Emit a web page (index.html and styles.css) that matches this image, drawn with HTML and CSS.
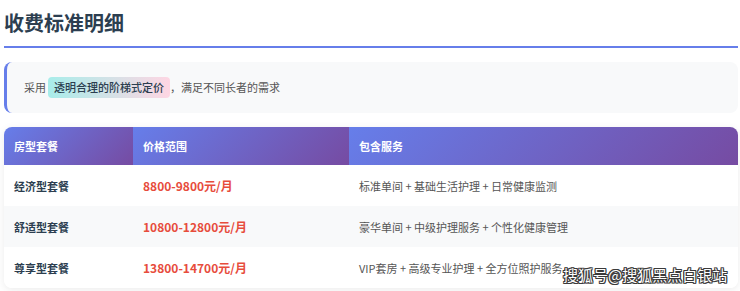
FILE: index.html
```html
<!DOCTYPE html>
<html lang="zh">
<head>
<meta charset="utf-8">
<title>收费标准明细</title>
<link rel="stylesheet" href="styles.css">
</head>
<body>
<div class="page">
  <h2 class="title">收费标准明细</h2>
  <div class="note">
    <span class="lead">采用</span><span class="hl">透明合理的阶梯式定价</span><span>，满足不同长者的需求</span>
  </div>
  <table class="fees">
    <thead>
      <tr>
        <th class="c1">房型套餐</th>
        <th class="c2">价格范围</th>
        <th class="c3">包含服务</th>
      </tr>
    </thead>
    <tbody>
      <tr>
        <td class="name">经济型套餐</td>
        <td class="price">8800-9800元/月</td>
        <td class="svc">标准单间 + 基础生活护理 + 日常健康监测</td>
      </tr>
      <tr class="alt">
        <td class="name">舒适型套餐</td>
        <td class="price">10800-12800元/月</td>
        <td class="svc">豪华单间 + 中级护理服务 + 个性化健康管理</td>
      </tr>
      <tr>
        <td class="name">尊享型套餐</td>
        <td class="price">13800-14700元/月</td>
        <td class="svc">VIP套房 + 高级专业护理 + 全方位照护服务</td>
      </tr>
    </tbody>
  </table>
  <div class="watermark">搜狐号@搜狐黑点白银站</div>
</div>
</body>
</html>
```

FILE: styles.css
```css
html, body {
  margin: 0;
  padding: 0;
  background: #ffffff;
}

body {
  font-family: "Noto Sans CJK SC", "Noto Sans", sans-serif;
  color: #333;
}

.page {
  position: relative;
  width: 734px;
  padding: 0 2px 0 4px;
  overflow: hidden;
  height: 291px;
}

.title {
  margin: 0;
  padding-top: 9px;
  padding-bottom: 9px;
  font-size: 20px;
  line-height: 28px;
  font-weight: 700;
  color: #2c3e50;
  border-bottom: 2px solid #667eea;
}

.note {
  margin-top: 14px;
  background: #f8f9fa;
  border-left: 3px solid #667eea;
  border-radius: 8px;
  padding: 15px 17px;
  font-size: 11px;
  line-height: 21px;
  color: #555;
  display: flex;
  align-items: center;
}

.lead {
  margin-right: 2px;
}

.hl {
  background: linear-gradient(90deg, #a8edea 0%, #fed6e3 100%);
  color: #2c3e50;
  padding: 0 6px;
  border-radius: 4px;
  font-weight: 500;
}

.fees {
  margin-top: 14px;
  width: 734px;
  border-collapse: separate;
  border-spacing: 0;
  border-radius: 8px;
  overflow: hidden;
  box-shadow: 0 2px 8px rgba(0, 0, 0, 0.08);
  font-size: 11px;
  table-layout: fixed;
}

.fees th {
  background: linear-gradient(135deg, #667eea 0%, #764ba2 100%);
  color: #ffffff;
  font-weight: 700;
  text-align: left;
  height: 38px;
  padding: 0 10px;
  box-sizing: border-box;
}

.fees th.c1 { width: 129px; }
.fees th.c2 { width: 216px; }

.fees td {
  height: 41px;
  padding: 0 10px;
  box-sizing: border-box;
  background: #ffffff;
}

.fees tr.alt td {
  background: #f8f9fa;
}

.name {
  font-weight: 700;
  color: #2c3e50;
}

.price {
  font-weight: 700;
  color: #e74c3c;
  font-size: 12px;
}

.svc {
  color: #555;
}

.watermark {
  position: absolute;
  left: 563px;
  top: 264px;
  font-size: 15px;
  line-height: 22px;
  color: #ffffff;
  letter-spacing: 0;
  text-shadow: 1px 0 0 #3a3a3a, -1px 0 0 #3a3a3a, 0 1px 0 #3a3a3a, 0 -1px 0 #3a3a3a, 1px 1px 0 #3a3a3a, -1px -1px 0 #3a3a3a, 1px -1px 0 #3a3a3a, -1px 1px 0 #3a3a3a;
}
```
